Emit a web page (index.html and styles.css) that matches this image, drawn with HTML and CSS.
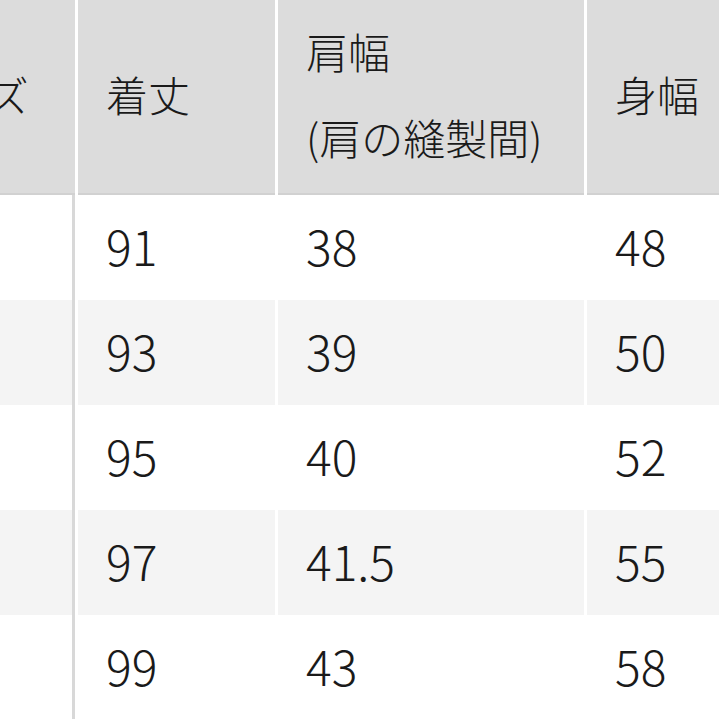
FILE: index.html
```html
<!DOCTYPE html>
<html lang="ja">
<head>
<meta charset="utf-8">
<link rel="stylesheet" href="styles.css">
</head>
<body>
<div class="table">
  <div class="cell head">サイズ</div>
  <div class="cell head">着丈</div>
  <div class="cell head two"><span>肩幅</span><span>(肩の縫製間)</span></div>
  <div class="cell head">身幅</div>

  <div class="cell first"></div><div class="cell num">91</div><div class="cell num">38</div><div class="cell num">48</div>
  <div class="cell first alt"></div><div class="cell num alt">93</div><div class="cell num alt">39</div><div class="cell num alt">50</div>
  <div class="cell first"></div><div class="cell num">95</div><div class="cell num">40</div><div class="cell num">52</div>
  <div class="cell first alt"></div><div class="cell num alt">97</div><div class="cell num alt">41.5</div><div class="cell num alt">55</div>
  <div class="cell first"></div><div class="cell num">99</div><div class="cell num">43</div><div class="cell num">58</div>
</div>
</body>
</html>
```
FILE: styles.css
```css
html, body {
  margin: 0;
  padding: 0;
  background: #ffffff;
  overflow: hidden;
}
body {
  width: 719px;
  height: 719px;
  font-family: "Noto Sans CJK JP", "Noto Sans", sans-serif;
  font-weight: 300;
  color: #1a1a1a;
}
.table {
  display: grid;
  grid-template-columns: 199px 197px 306px 220px;
  grid-template-rows: 195px repeat(5, 105px);
  column-gap: 3px;
  margin-left: -124px;
  background: #ffffff;
}
.cell {
  display: flex;
  align-items: center;
  padding-left: 28px;
  box-sizing: border-box;
  white-space: nowrap;
}
.head {
  background: #dcdcdc;
  font-size: 42px;
  padding-bottom: 8px;
  box-shadow: inset 0 -2px 0 #d1d1d1;
}
.two {
  flex-direction: column;
  align-items: flex-start;
  justify-content: center;
  line-height: 86px;
}
.num {
  font-size: 48px;
  padding-bottom: 6px;
}
.first {
  border-right: 3px solid #d8d8d8;
}
.alt {
  background: #f4f4f4;
}
```
